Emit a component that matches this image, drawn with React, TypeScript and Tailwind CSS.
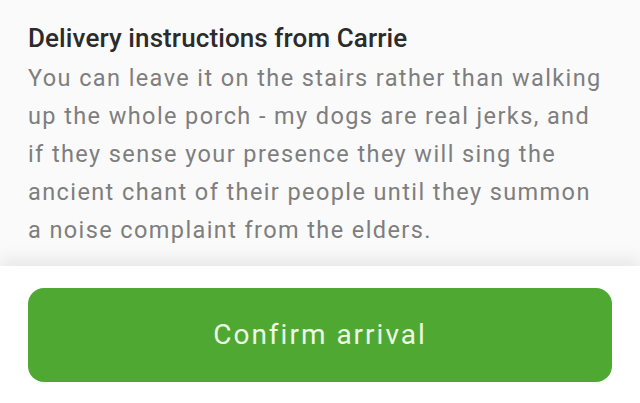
import React from 'react';

const App: React.FC = () => {
  return (
    <div className="w-[640px] h-[403px] overflow-hidden bg-white flex flex-col" style={{ fontFamily: 'Roboto, "Liberation Sans", sans-serif' }}>
      {/* instructions card */}
      <div className="h-[266px] bg-[#fafafa] px-[28px] pt-[20px]">
        <h2 className="text-[26px] leading-[36px] font-medium text-[#2b2b2b] tracking-[0.1px]">Delivery instructions from Carrie</h2>
        <p className="mt-[3px] text-[23.5px] leading-[38px] text-[#7e7e7e] tracking-[1.4px]">
          You can leave it on the stairs rather than walking<br />
          up the whole porch - my dogs are real jerks, and<br />
          if they sense your presence they will sing the<br />
          ancient chant of their people until they summon<br />
          a noise complaint from the elders.
        </p>
      </div>

      {/* bottom bar */}
      <div className="relative flex-1 bg-white px-[28px] pt-[22px] shadow-[0_-8px_14px_rgba(0,0,0,0.07)]">
        <button className="w-[584px] h-[94px] rounded-[16px] bg-[#4fa832] text-[#ecfbe4] text-[28px] tracking-[2px] flex items-center justify-center">
          Confirm arrival
        </button>
      </div>
    </div>
  );
};

export default App;
